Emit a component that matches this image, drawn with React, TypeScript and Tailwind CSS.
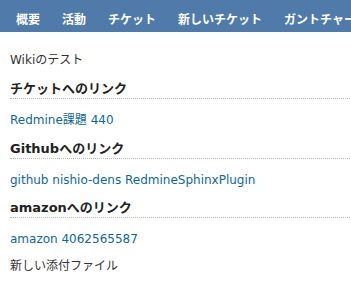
import React from 'react';

const tabs = ['概要', '活動', 'チケット', '新しいチケット', 'ガントチャート'];

const font = { fontFamily: '"DejaVu Sans", "Noto Sans CJK JP", sans-serif' };

const Heading = ({ children, className = '' }: { children: React.ReactNode; className?: string }) => (
  <h3 className={`text-[13px] leading-[18px] font-bold text-[#222] border-b border-dotted border-[#bbb] ${className}`}>
    {children}
  </h3>
);

const Link = ({ children, className = '' }: { children: React.ReactNode; className?: string }) => (
  <p className={`text-[12px] leading-[18px] ${className}`}>
    <a href="#" className="text-[#169]">{children}</a>
  </p>
);

export default function App() {
  return (
    <div className="w-[351px] h-[304px] overflow-hidden bg-white" style={font}>
      <div className="h-8 bg-[#507aaa] flex items-center pl-[5px] whitespace-nowrap overflow-hidden">
        {tabs.map(t => (
          <span key={t} className="px-[11px] text-white text-[12px] font-bold leading-none pt-[7px]">
            {t}
          </span>
        ))}
      </div>

      <div className="pl-[10px] pr-px">
        <p className="mt-[19px] text-[12px] leading-[18px] text-[#333]">Wikiのテスト</p>
        <Heading className="mt-[11px]">チケットへのリンク</Heading>
        <Link className="mt-[12px]">Redmine課題 440</Link>
        <Heading className="mt-[11px]">Githubへのリンク</Heading>
        <Link className="mt-[12px]">github nishio-dens RedmineSphinxPlugin</Link>
        <Heading className="mt-[10px]">amazonへのリンク</Heading>
        <Link className="mt-[12px]">amazon 4062565587</Link>
        <p className="mt-[9px] text-[12px] leading-[18px] text-[#333]">新しい添付ファイル</p>
      </div>
    </div>
  );
}
